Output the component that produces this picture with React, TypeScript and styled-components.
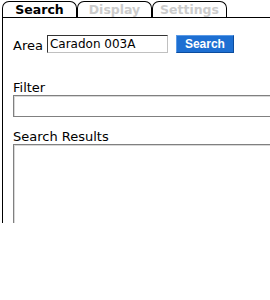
import styled, { createGlobalStyle } from 'styled-components';

const GlobalStyle = createGlobalStyle`
  html, body {
    margin: 0;
    background: #ffffff;
    overflow: hidden;
  }
  body {
    font-family: "DejaVu Sans", Verdana, sans-serif;
    font-size: 13px;
    color: #000000;
  }
`;

const Page = styled.div`
  width: 300px;
  padding-left: 2px;
`;

const TabBar = styled.div`
  display: flex;
  align-items: flex-end;
  height: 17px;
  border-bottom: 1px solid #000000;
`;

const Tab = styled.div<{ $active?: boolean }>`
  box-sizing: border-box;
  width: 75px;
  height: 16px;
  line-height: 16px;
  border: 1px solid #000000;
  border-bottom: none;
  border-radius: 7px 7px 0 0;
  background: #ffffff;
  text-align: center;
  font-weight: bold;
  font-size: 12.5px;
  color: ${p => (p.$active ? '#000000' : '#cccccc')};
`;

const Panel = styled.div`
  box-sizing: border-box;
  height: 205px;
  border-left: 1px solid #000000;
  padding: 17px 0 0 10px;
  overflow: hidden;
`;

const AreaRow = styled.div`
  display: flex;
  align-items: flex-end;
  gap: 4px;
`;

const Label = styled.div`
  line-height: 15px;
`;

const AreaInput = styled.input`
  box-sizing: border-box;
  width: 121px;
  height: 18px;
  margin: 0;
  padding: 0 2px;
  border: 1px solid;
  border-color: #333333 #c0c0c0 #c0c0c0 #333333;
  font-family: "DejaVu Sans", Verdana, sans-serif;
  font-size: 12px;
  color: #000000;
  outline: none;
`;

const SearchButton = styled.button`
  box-sizing: border-box;
  width: 58px;
  height: 18px;
  margin: 0 0 0 4px;
  padding: 0;
  border: 1px solid;
  border-color: #5a9ae6 #0b4c9e #0b4c9e #5a9ae6;
  background: #1d6fd2;
  color: #ffffff;
  font-family: "Liberation Sans", Arial, sans-serif;
  font-weight: bold;
  font-size: 12px;
`;

const Field = styled.div<{ $top: number }>`
  display: flex;
  flex-direction: column;
  margin-top: ${p => p.$top}px;
`;

const Box = styled.div<{ $height: number }>`
  box-sizing: border-box;
  width: 280px;
  height: ${p => p.$height}px;
  border: 1px solid #808080;
  box-shadow: inset 1px 1px 0 #d8d8d8;
`;

export default function App() {
  return (
    <>
      <GlobalStyle />
      <Page>
        <TabBar>
          <Tab $active>Search</Tab>
          <Tab>Display</Tab>
          <Tab>Settings</Tab>
        </TabBar>
        <Panel>
          <AreaRow>
            <Label>Area</Label>
            <AreaInput defaultValue="Caradon 003A" />
            <SearchButton>Search</SearchButton>
          </AreaRow>
          <Field $top={27}>
            <Label>Filter</Label>
            <Box $height={22} />
          </Field>
          <Field $top={12}>
            <Label>Search Results</Label>
            <Box $height={120} />
          </Field>
        </Panel>
      </Page>
    </>
  );
}
